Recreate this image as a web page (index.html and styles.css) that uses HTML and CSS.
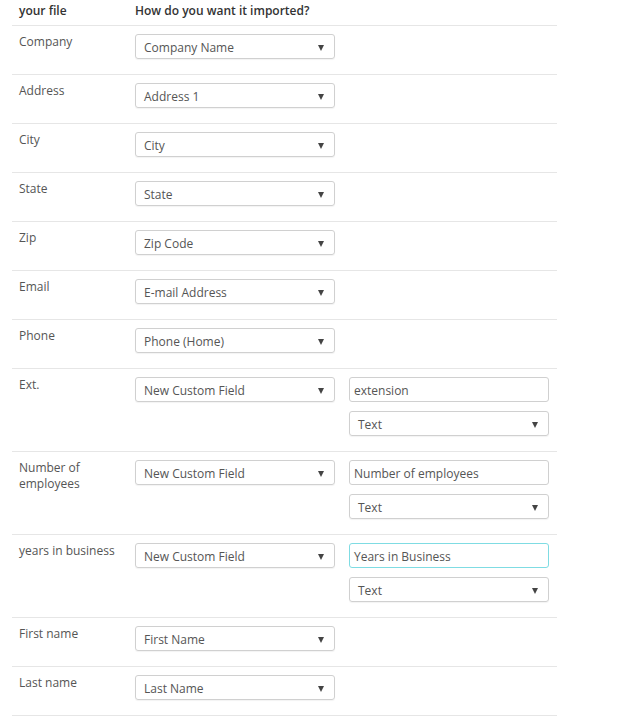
FILE: index.html
```html
<!DOCTYPE html>
<html>
<head>
    <title>Import Mapping</title>
    <link rel="stylesheet" href="styles.css">
</head>
<body>
    <div class="mapper">
        <div class="row head">
            <div class="col-label">your file</div>
            <div class="col-field">How do you want it imported?</div>
        </div>

        <div class="row">
            <div class="col-label">Company</div>
            <div class="col-field"><div class="select">Company Name<span class="arrow"></span></div></div>
        </div>

        <div class="row">
            <div class="col-label">Address</div>
            <div class="col-field"><div class="select">Address 1<span class="arrow"></span></div></div>
        </div>

        <div class="row">
            <div class="col-label">City</div>
            <div class="col-field"><div class="select">City<span class="arrow"></span></div></div>
        </div>

        <div class="row">
            <div class="col-label">State</div>
            <div class="col-field"><div class="select">State<span class="arrow"></span></div></div>
        </div>

        <div class="row">
            <div class="col-label">Zip</div>
            <div class="col-field"><div class="select">Zip Code<span class="arrow"></span></div></div>
        </div>

        <div class="row">
            <div class="col-label">Email</div>
            <div class="col-field"><div class="select">E-mail Address<span class="arrow"></span></div></div>
        </div>

        <div class="row">
            <div class="col-label">Phone</div>
            <div class="col-field"><div class="select">Phone (Home)<span class="arrow"></span></div></div>
        </div>

        <div class="row">
            <div class="col-label">Ext.</div>
            <div class="col-field"><div class="select">New Custom Field<span class="arrow"></span></div></div>
            <div class="col-extra">
                <div class="input">extension</div>
                <div class="select">Text<span class="arrow"></span></div>
            </div>
        </div>

        <div class="row">
            <div class="col-label">Number of<br>employees</div>
            <div class="col-field"><div class="select">New Custom Field<span class="arrow"></span></div></div>
            <div class="col-extra">
                <div class="input">Number of employees</div>
                <div class="select">Text<span class="arrow"></span></div>
            </div>
        </div>

        <div class="row">
            <div class="col-label">years in business</div>
            <div class="col-field"><div class="select">New Custom Field<span class="arrow"></span></div></div>
            <div class="col-extra">
                <div class="input focused">Years in Business</div>
                <div class="select">Text<span class="arrow"></span></div>
            </div>
        </div>

        <div class="row">
            <div class="col-label">First name</div>
            <div class="col-field"><div class="select">First Name<span class="arrow"></span></div></div>
        </div>

        <div class="row">
            <div class="col-label">Last name</div>
            <div class="col-field"><div class="select">Last Name<span class="arrow"></span></div></div>
        </div>
    </div>
</body>
</html>
```

FILE: styles.css
```css
* {
    box-sizing: border-box;
}

body {
    margin: 0;
    font-family: "Open Sans", Arial, sans-serif;
    font-size: 12px;
    line-height: 16px;
    color: #555;
    background-color: #fff;
}

.mapper {
    width: 545px;
    margin-left: 12px;
}

.row {
    display: grid;
    grid-template-columns: 123px 200px 214px;
    align-items: start;
    padding: 8px 0 15px;
    border-bottom: 1px solid #e6e6e6;
}

.row.head {
    height: 26px;
    padding: 3px 0 0;
    font-weight: 600;
    color: #333;
}

.col-label {
    padding-left: 7px;
}

.col-extra {
    display: flex;
    flex-direction: column;
    gap: 9px;
    margin-left: 14px;
}

.select, .input {
    position: relative;
    height: 25px;
    line-height: 23px;
    padding: 1px 8px 0;
    border: 1px solid #d0d0d0;
    border-radius: 3px;
    color: #555;
    white-space: nowrap;
}

.select {
    box-shadow: 0 1px 1px rgba(0, 0, 0, 0.05);
}

.input {
    padding-left: 4px;
}

.input.focused {
    border-color: #7fdce3;
}

.arrow {
    position: absolute;
    right: 10px;
    top: 10px;
    width: 0;
    height: 0;
    border-left: 3px solid transparent;
    border-right: 3px solid transparent;
    border-top: 6px solid #444;
}
```
